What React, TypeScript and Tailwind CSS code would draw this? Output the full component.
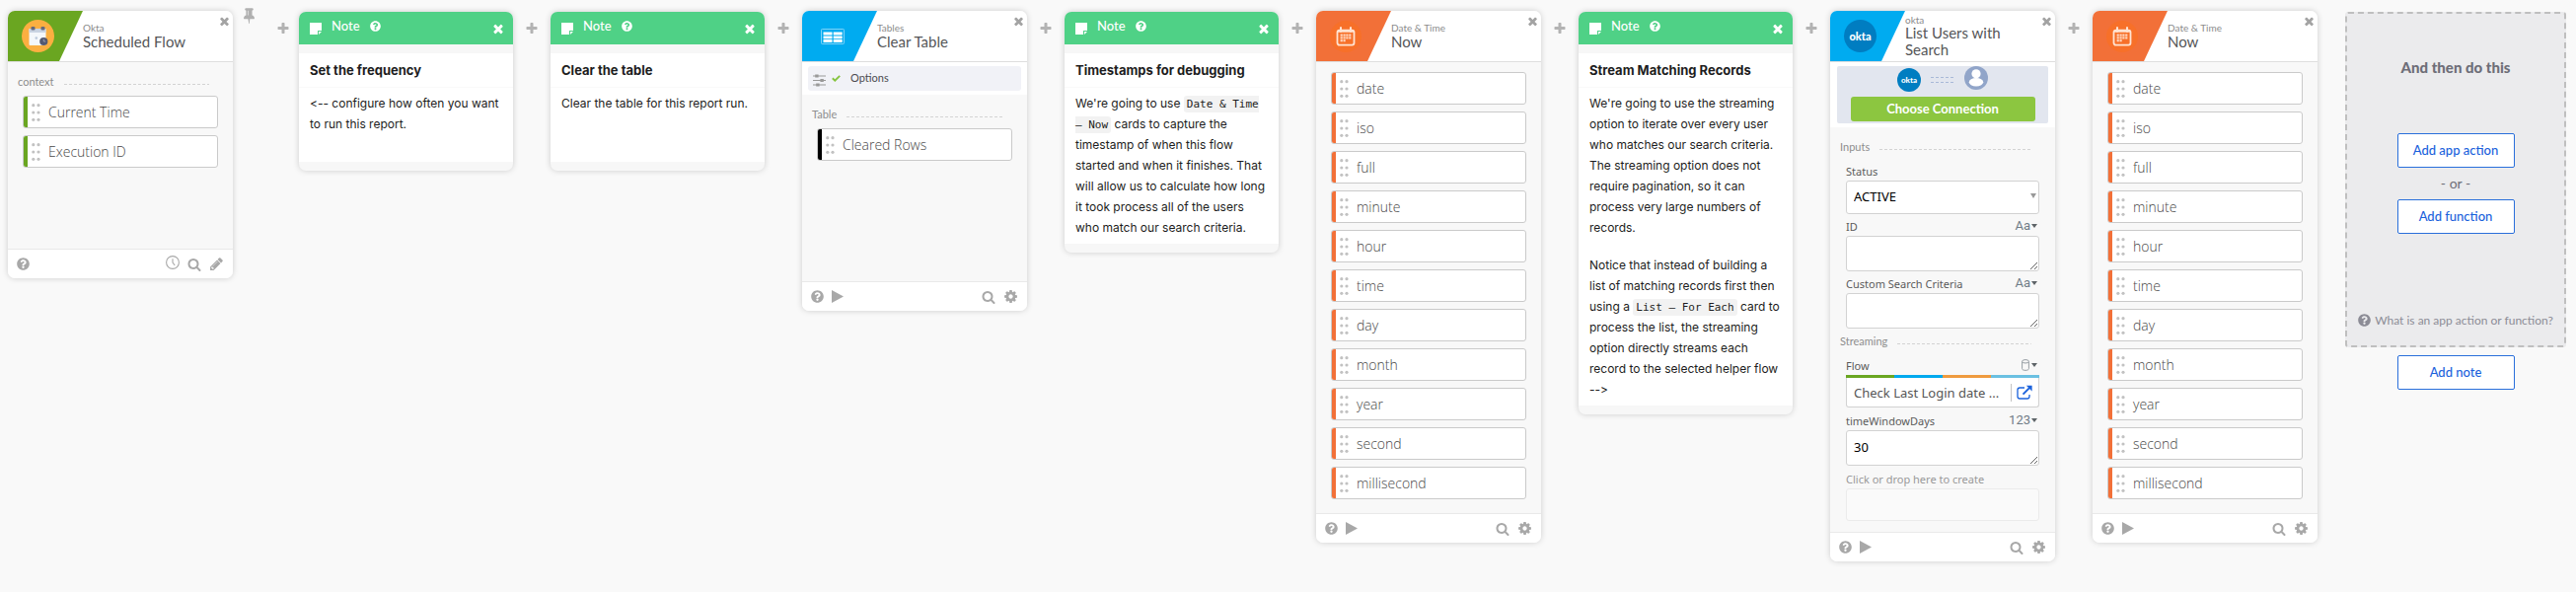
import React, { useId } from "react";
import { FaQuestionCircle } from "react-icons/fa";

const ICONS = {
  times:
    "M1490 1322q0 40-28 68l-136 136q-28 28-68 28t-68-28l-294-294-294 294q-28 28-68 28t-68-28l-136-136q-28-28-28-68t28-68l294-294-294-294q-28-28-28-68t28-68l136-136q28-28 68-28t68 28l294 294 294-294q28-28 68-28t68 28l136 136q28 28 28 68t-28 68l-294 294 294 294q28 28 28 68z",
  plus: "M1600 736v192q0 40-28 68t-68 28h-416v416q0 40-28 68t-68 28h-192q-40 0-68-28t-28-68v-416h-416q-40 0-68-28t-28-68v-192q0-40 28-68t68-28h416v-416q0-40 28-68t68-28h192q40 0 68 28t28 68v416h416q40 0 68 28t28 68z",
  tack: "M800 864v-448q0-14-9-23t-23-9-23 9-9 23v448q0 14 9 23t23 9 23-9 9-23zm672 352q0 26-19 45t-45 19h-429l-51 483q-2 12-10.5 20.5t-20.5 8.5h-1q-27 0-32-27l-76-485h-404q-26 0-45-19t-19-45q0-123 78.5-221.5t177.5-98.5v-512q-52 0-90-38t-38-90 38-90 90-38h640q52 0 90 38t38 90-38 90-90 38v512q99 0 177.5 98.5t78.5 221.5z",
  gear: "M1152 896q0-106-75-181t-181-75-181 75-75 181 75 181 181 75 181-75 75-181zm512-109v222q0 12-8 23t-20 13l-185 28q-19 54-39 91 35 50 107 138 10 12 10 25t-9 23q-27 37-99 108t-94 71q-12 0-26-9l-138-108q-44 23-91 38-16 136-29 186-7 28-36 28h-222q-14 0-24.5-8.5t-11.5-21.5l-28-184q-49-16-90-37l-141 107q-10 9-25 9-14 0-25-11-126-114-165-168-7-10-7-23 0-12 8-23 15-21 51-66.5t54-70.5q-27-50-41-99l-183-27q-13-2-21-12.5t-8-23.5v-222q0-12 8-23t19-13l186-28q14-46 39-92-40-57-107-138-10-12-10-24 0-10 9-23 26-36 98.5-107.5t94.5-71.5q13 0 26 10l138 107q44-23 91-38 16-136 29-186 7-28 36-28h222q14 0 24.5 8.5t11.5 21.5l28 184q49 16 90 37l142-107q9-9 24-9 13 0 25 10 129 119 165 170 7 8 7 22 0 12-8 23-15 21-51 66.5t-54 70.5q26 50 41 98l183 28q13 2 21 12.5t8 23.5z",
  search:
    "M1216 832q0-185-131.5-316.5t-316.5-131.5-316.5 131.5-131.5 316.5 131.5 316.5 316.5 131.5 316.5-131.5 131.5-316.5zm512 832q0 52-38 90t-90 38q-54 0-90-38l-343-342q-179 124-399 124-143 0-273.5-55.5t-225-150-150-225-55.5-273.5 55.5-273.5 150-225 225-150 273.5-55.5 273.5 55.5 225 150 150 225 55.5 273.5q0 220-124 399l343 343q37 37 37 90z",
  pencil:
    "M491 1536l91-91-235-235-91 91v107h128v128h107zm523-928q0-22-22-22-10 0-17 7l-542 542q-7 7-7 17 0 22 22 22 10 0 17-7l542-542q7-7 7-17zm-54-192l416 416-832 832h-416v-416zm683 96q0 53-37 90l-166 166-416-416 166-165q36-38 90-38 53 0 91 38l235 234q37 39 37 91z",
};

function Icon({ name, className }: { name: keyof typeof ICONS; className: string }) {
  return (
    <svg viewBox="0 0 1792 1792" fill="currentColor" aria-hidden="true" className={className}>
      <path d={ICONS[name]} />
    </svg>
  );
}

function AddStep({ withPin = false }: { withPin?: boolean }) {
  return (
    <div className={withPin ? "flex w-[67px] shrink-0 items-start" : "flex w-[38px] shrink-0 items-start justify-center"}>
      {withPin && (
        <button type="button" aria-label="Pin" className="-mt-1 ml-2 mr-[19px] text-[#b0b0b0]">
          <Icon name="tack" className="size-[17px]" />
        </button>
      )}
      <button type="button" aria-label="Add step" className="mt-[11px] text-[#b3b3b3]">
        <Icon name="plus" className="size-[14px]" />
      </button>
    </div>
  );
}

type Tone = "green" | "blue" | "orange" | "black";

const TONE_BG: Record<Tone, string> = {
  green: "bg-[#6aa621]",
  blue: "bg-[#00abf0]",
  orange: "bg-[#f27038]",
  black: "bg-black",
};

interface CardProps {
  tone: Tone;
  logo: React.ReactNode;
  app: string;
  title: string;
  tall?: boolean;
  scheduled?: boolean;
  children: React.ReactNode;
}

function Card({ tone, logo, app, title, tall, scheduled, children }: CardProps) {
  return (
    <article className="flex w-[228px] shrink-0 flex-col overflow-hidden rounded-[7px] bg-[#f8f8f8] shadow-[0_0_6px_rgba(0,0,0,0.18)]">
      <header className="flex h-[52px] border-b border-[#dedede] bg-white">
        <div className={`${TONE_BG[tone]} flex w-[76px] shrink-0 items-center pl-[14px] [clip-path:polygon(0_0,100%_0,52px_100%,0_100%)]`}>
          {logo}
        </div>
        <div className="flex min-w-0 flex-1 flex-col justify-center font-[Lato,sans-serif]">
          <p className={tall ? "text-[10px] leading-[10px] text-[#8b8b8b]" : "text-[10px] leading-[11px] text-[#8b8b8b]"}>{app}</p>
          <h2 className="text-[15px] leading-[17px] text-[#555658]">{title}</h2>
        </div>
        <button type="button" aria-label="Close" className="mr-[2px] mt-1 self-start text-[#a3a3a3]">
          <Icon name="times" className="size-[13px]" />
        </button>
      </header>
      <div className="flex-1">{children}</div>
      <footer className="flex h-[30px] items-center gap-2 border-t border-[#e9e9e9] bg-white px-[9px] text-[#a8a8a8]">
        <button type="button" aria-label="Help">
          <FaQuestionCircle className="size-[13px]" />
        </button>
        {!scheduled && (
          <button type="button" aria-label="Run">
            <svg viewBox="0 0 12 13" fill="currentColor" className="h-[13px] w-3">
              <path d="M0 0l12 6.5L0 13z" />
            </svg>
          </button>
        )}
        <span className="flex-1" />
        {scheduled && (
          <button type="button" aria-label="Schedule" className="mb-1">
            <svg viewBox="0 0 14 14" fill="none" stroke="currentColor" strokeWidth="1.1" className="size-[14px]">
              <circle cx="7" cy="7" r="6.4" />
              <path d="M7 3.2V7l2.2 3" />
            </svg>
          </button>
        )}
        <button type="button" aria-label="Search">
          <Icon name="search" className="size-[14px]" />
        </button>
        <button type="button" aria-label={scheduled ? "Edit" : "Settings"}>
          <Icon name={scheduled ? "pencil" : "gear"} className="size-[15px]" />
        </button>
      </footer>
    </article>
  );
}

function SectionLabel({ children }: { children: React.ReactNode }) {
  return (
    <div className="flex items-center gap-[10px] pl-[10px] pr-6">
      <span className="font-[Lato,sans-serif] text-[11px] leading-4 text-[#8d8d8d]">{children}</span>
      <svg className="mt-1 h-px min-w-0 flex-1" aria-hidden="true">
        <line x1="0" x2="100%" y1="0.5" y2="0.5" stroke="#d3d3d3" strokeDasharray="3 2" />
      </svg>
    </div>
  );
}

function Slot({ tone, children }: { tone: Tone; children: React.ReactNode }) {
  return (
    <li className="flex h-[33px] items-center overflow-hidden rounded-[3px] border border-[#cacaca] bg-white">
      <span className={`${TONE_BG[tone]} h-full w-1`} />
      <svg viewBox="0 0 9 18" fill="#c2c2c2" className="ml-1 mr-2 h-[18px] w-[9px]" aria-hidden="true">
        {[1.7, 9, 16.3].map((y) => (
          <g key={y}>
            <circle cx="1.8" cy={y} r="1.6" />
            <circle cx="7" cy={y} r="1.6" />
          </g>
        ))}
      </svg>
      <span className="font-['Open_Sans','Noto_Sans',sans-serif] text-[14px] leading-5 font-light text-[#484848]">{children}</span>
    </li>
  );
}

function NoteCard({ title, children }: { title: string; children: React.ReactNode }) {
  return (
    <article className="mt-px w-[217px] shrink-0 overflow-hidden rounded-[7px] bg-[#f7f7f7] pb-[9px] font-[Inter,sans-serif] text-[#1d1d21] shadow-[0_0_6px_rgba(0,0,0,0.18)] [font-feature-settings:'calt'_0]">
      <header className="mb-[9px] flex h-[33px] items-center bg-[#4fd186] pl-[11px] pr-2 text-white">
        <svg viewBox="0 0 12 12" fill="currentColor" className="mr-[10px] size-3" aria-hidden="true">
          <path d="M0 0h12v8H8v4H0z" />
          <path d="M9 9h3L9 12z" />
        </svg>
        <span className="pb-[6px] font-[Lato,sans-serif] text-[13px] leading-5 font-medium">Note</span>
        <button type="button" aria-label="About notes" className="mb-1 ml-[10px]">
          <FaQuestionCircle className="size-[11px]" />
        </button>
        <button type="button" aria-label="Close" className="ml-auto">
          <Icon name="times" className="size-[14px]" />
        </button>
      </header>
      <h2 className="border-b border-[#fafafa] bg-white px-[11px] pb-[7px] pt-2 text-[13px] leading-[19px] font-bold">{title}</h2>
      <div className="flex min-h-[75px] flex-col gap-[17px] bg-white pb-[6px] pl-[11px] pr-[10px] pt-[5px] text-[12px] leading-[21px]">{children}</div>
    </article>
  );
}

function Code({ children }: { children: React.ReactNode }) {
  return (
    <code className="rounded-[3px] bg-[#f2f2f2] px-[3px] py-[2px] font-['DejaVu_Sans_Mono',monospace] text-[11px] leading-none">{children}</code>
  );
}

function Caret() {
  return (
    <svg viewBox="0 0 6 4" fill="#5e6468" className="h-1 w-[6px]" aria-hidden="true">
      <path d="M0 0h6L3 4z" />
    </svg>
  );
}

function Field({ label, badge, children }: { label: string; badge?: React.ReactNode; children: (id: string) => React.ReactNode }) {
  const id = useId();
  return (
    <div className="flex flex-col gap-px">
      <div className="flex h-4 items-center justify-between pr-[2px]">
        <label htmlFor={id} className="font-['Noto_Sans','Open_Sans',sans-serif] text-[11px] leading-4 text-[#5b5b5b]">
          {label}
        </label>
        {badge && (
          <button type="button" aria-label={`${label} type`} className="mb-[2px] flex items-center gap-px font-[Roboto,sans-serif] text-[13px] leading-4 text-[#707c87]">
            {badge}
            <Caret />
          </button>
        )}
      </div>
      {children(id)}
    </div>
  );
}

const AREA =
  "block h-9 w-full resize rounded-[3px] border border-[#d2d2d2] bg-white px-[7px] py-[6px] font-['Noto_Sans','Open_Sans',sans-serif] text-[13px] leading-5 text-black outline-none";

function CalendarLogo() {
  return (
    <span className="flex size-8 items-center justify-center rounded-full bg-[#f77029]">
      <svg viewBox="0 0 20 20" className="size-5" aria-hidden="true">
        <rect x="1.5" y="3.6" width="17" height="15" rx="2" fill="none" stroke="#ffe3d2" strokeWidth="1.8" />
        <path d="M2 4.6h16" stroke="#ffe3d2" strokeWidth="2.4" />
        <path d="M5 1v4M15 1v4" stroke="#ffe3d2" strokeWidth="2" strokeLinecap="round" />
        <g fill="#ffd5bd">
          {[7.5, 10.3, 13.1].map((y, row) =>
            [4.6, 7.5, 10.3, 13.2].map((x, col) =>
              row === 2 && col > 1 ? null : <rect key={`${x}-${y}`} x={x} y={y} width="2.2" height="2.2" />
            )
          )}
        </g>
      </svg>
    </span>
  );
}

function NowCard() {
  return (
    <Card tone="orange" app="Date & Time" title="Now" logo={<CalendarLogo />}>
      <ul className="flex flex-col gap-[7px] px-[15px] pb-[14px] pt-[10px]">
        {["date", "iso", "full", "minute", "hour", "time", "day", "month", "year", "second", "millisecond"].map((name) => (
          <Slot key={name} tone="orange">
            {name}
          </Slot>
        ))}
      </ul>
    </Card>
  );
}

const OUTLINE_BUTTON =
  "h-[35px] w-[119px] rounded-[2px] border border-[#2a6fdb] bg-white pb-[2px] font-[Lato,sans-serif] text-[13px] leading-4 font-medium text-[#1a62dc]";

export default function App() {
  return (
    <main className="flex min-h-screen items-start overflow-x-auto bg-[#f9f9f9] px-2 pb-6 pt-[11px]">
      <Card
        tone="green"
        app="Okta"
        title="Scheduled Flow"
        scheduled
        logo={
          <svg viewBox="0 0 33 33" className="size-[33px]" aria-hidden="true">
            <circle cx="16.5" cy="16.5" r="16.5" fill="#fbaf41" />
            <rect x="7.5" y="9" width="17" height="17" rx="1" fill="#f4f7fb" />
            <path d="M7.5 9h17v4h-17z" fill="#c9d3e2" />
            <rect x="9.5" y="7" width="4" height="3.6" rx="1" fill="#66697c" />
            <rect x="19.5" y="7" width="4" height="3.6" rx="1" fill="#66697c" />
            <circle cx="14.8" cy="18.6" r="1.3" fill="#bcc9dc" />
            <circle cx="22.3" cy="22" r="4.1" fill="#555971" />
            <path d="M22.3 19.6V22h2" fill="none" stroke="#a5a9bc" strokeWidth="0.8" />
          </svg>
        }
      >
        <div className="pb-[75px] pt-3">
          <SectionLabel>context</SectionLabel>
          <ul className="flex flex-col gap-[7px] px-[15px] pb-[7px] pt-[6px]">
            <Slot tone="green">Current Time</Slot>
            <Slot tone="green">Execution ID</Slot>
          </ul>
        </div>
      </Card>
      <AddStep withPin />
      <NoteCard title="Set the frequency">
        <p>&lt;-- configure how often you want to run this report.</p>
      </NoteCard>
      <AddStep />
      <NoteCard title="Clear the table">
        <p>Clear the table for this report run.</p>
      </NoteCard>
      <AddStep />
      <Card
        tone="blue"
        app="Tables"
        title="Clear Table"
        logo={
          <svg viewBox="0 0 24 16" className="ml-[5px] h-4 w-6" aria-hidden="true">
            <rect x="0.5" y="0.5" width="23" height="15" rx="0.8" fill="none" stroke="#7fd3f8" />
            <path d="M2.5 3.5h9v3h-9zM12.7 3.5h9v3h-9zM2.5 7.4h9v2.8h-9zM12.7 7.4h9v2.8h-9zM2.5 11.1h9v2.8h-9zM12.7 11.1h9v2.8h-9z" fill="#fff" />
          </svg>
        }
      >
        <div className="bg-white px-[6px] py-1">
          <button type="button" className="flex h-[25px] w-full items-center rounded-[3px] bg-[#f1f2f7] px-[5px] text-left">
            <svg viewBox="0 0 13 13" className="mt-1 size-[13px]" fill="#999" aria-hidden="true">
              <path d="M0 1.500h13v1H0zM0 6h13v1H0zM0 10.500h13v1H0z" />
              <path d="M2.200 .4h3.400v3.200H2.200zM7.400 4.900h3.400v3.200H7.400zM3.200 9.400h3.400v3.200H3.200z" />
            </svg>
            <svg viewBox="0 0 9 7" className="ml-[6px] mr-[10px] h-[7px] w-[9px]" fill="none" stroke="#86c440" strokeWidth="2" aria-hidden="true">
              <path d="M0.800 3.200l2.500 2.400L8.200 0.900" />
            </svg>
            <span className="pb-px font-[Lato,sans-serif] text-[11px] leading-4 text-[#4c4c50]">Options</span>
          </button>
        </div>
        <div className="pb-[122px] pt-3">
          <SectionLabel>Table</SectionLabel>
          <ul className="px-[15px] pt-[6px]">
            <Slot tone="black">Cleared Rows</Slot>
          </ul>
        </div>
      </Card>
      <AddStep />
      <NoteCard title="Timestamps for debugging">
        <p>
          We're going to use <Code>Date &amp; Time – Now</Code> cards to capture the timestamp of when this flow started and when it finishes. That will
          allow us to calculate how long it took process all of the users who match our search criteria.
        </p>
      </NoteCard>
      <AddStep />
      <NowCard />
      <AddStep />
      <NoteCard title="Stream Matching Records">
        <p>
          We're going to use the streaming option to iterate over every user who matches our search criteria. The streaming option does not require
          pagination, so it can process very large numbers of records.
        </p>
        <p>
          Notice that instead of building a list of matching records first then using a <Code>List – For Each</Code> card to process the list, the
          streaming option directly streams each record to the selected helper flow --&gt;
        </p>
      </NoteCard>
      <AddStep />
      <Card
        tone="blue"
        app="okta"
        title="List Users with Search"
        tall
        logo={
          <span className="flex size-[33px] items-center justify-center rounded-full bg-[#007dc1] pb-px font-[Lato,sans-serif] text-[11px] leading-none font-black text-white">
            okta
          </span>
        }
      >
        <div className="bg-white px-[7px] py-1">
          <div className="flex h-[58px] flex-col items-center rounded-[2px] bg-[#e2e6ef]">
            <div className="flex h-[31px] shrink-0 items-center">
              <span className="mb-[5px] flex size-6 items-center justify-center self-end rounded-full bg-[#007dc1] pb-px font-[Lato,sans-serif] text-[8px] leading-none font-black text-white">
                okta
              </span>
              <svg viewBox="0 0 24 6" className="mx-[10px] mb-1 h-[6px] w-6" stroke="#a9b9d8" strokeDasharray="3 2" aria-hidden="true">
                <path d="M0 .5h24M0 5.5h24" />
              </svg>
              <svg viewBox="0 0 24 24" className="-mt-2 size-6" aria-hidden="true">
                <circle cx="12" cy="12" r="12" fill="#91a5c9" />
                <circle cx="12" cy="7.8" r="4.6" fill="#fff" />
                <ellipse cx="12" cy="16.3" rx="7.2" ry="4.2" fill="#fff" />
              </svg>
            </div>
            <button type="button" className="h-[25px] w-[187px] rounded-[3px] bg-[#8cc640] pb-[2px] font-[Lato,sans-serif] text-[13px] leading-4 font-bold text-white">
              Choose Connection
            </button>
          </div>
        </div>
        <div className="pb-[11px] pt-3">
          <SectionLabel>Inputs</SectionLabel>
          <div className="flex flex-col gap-[5px] px-4 pb-[5px] pt-[9px]">
            <Field label="Status">
              {(id) => (
                <div className="grid items-center">
                  <select
                    id={id}
                    defaultValue="ACTIVE"
                    className="col-start-1 row-start-1 h-[34px] w-full appearance-none rounded-[3px] border border-[#d2d2d2] bg-white px-[7px] font-['Noto_Sans','Open_Sans',sans-serif] text-[13px] text-black outline-none"
                  >
                    <option>ACTIVE</option>
                  </select>
                  <svg viewBox="0 0 6 5" fill="#999" className="pointer-events-none col-start-1 row-start-1 mb-1 mr-[3px] h-[5px] w-[6px] justify-self-end" aria-hidden="true">
                    <path d="M0 0h6L3 5z" />
                  </svg>
                </div>
              )}
            </Field>
            <Field label="ID" badge="Aa">
              {(id) => <textarea id={id} className={AREA} />}
            </Field>
            <Field label="Custom Search Criteria" badge="Aa">
              {(id) => <textarea id={id} className={AREA} />}
            </Field>
          </div>
          <SectionLabel>Streaming</SectionLabel>
          <div className="flex flex-col gap-[6px] px-4 pt-[9px]">
            <Field
              label="Flow"
              badge={
                <svg viewBox="0 0 8 12" fill="none" stroke="#969da3" className="mr-px h-3 w-2" aria-hidden="true">
                  <path d="M.6 2.5v7.200c0 2.200 6.800 2.200 6.800 0V2.500" />
                  <ellipse cx="4" cy="2.3" rx="3.4" ry="1.7" />
                </svg>
              }
            >
              {(id) => (
                <div>
                  <div className="grid h-[3px] grid-cols-4">
                    <span className="bg-[#6aa621]" />
                    <span className="bg-[#00a9ee]" />
                    <span className="bg-[#ef9b3f]" />
                    <span className="bg-[#6bc0e2]" />
                  </div>
                  <div className="flex h-[30px] items-center rounded-b-[3px] border border-t-0 border-[#d2d2d2] bg-white pl-[7px] pr-[6px]">
                    <input
                      id={id}
                      readOnly
                      value="Check Last Login date ..."
                      className="min-w-0 flex-1 bg-transparent font-['Noto_Sans','Open_Sans',sans-serif] text-[13px] leading-5 text-[#555] outline-none"
                    />
                    <button type="button" aria-label="Open flow" className="border-l border-[#c4c4c4] pl-[5px] text-[#1a62dc]">
                      <svg viewBox="0 0 16 16" fill="none" stroke="currentColor" className="my-px size-4" aria-hidden="true">
                        <path d="M8 3H3.200Q1 3 1 5.200v6.600Q1 14 3.200 14h7.600Q13 14 13 11.800V10" strokeWidth="1.3" />
                        <path d="M6.500 9.600L13.500 2.600" strokeWidth="2" />
                        <path d="M9.800 .8h5.800v5.800z" fill="currentColor" stroke="none" />
                      </svg>
                    </button>
                  </div>
                </div>
              )}
            </Field>
            <Field label="timeWindowDays" badge="123">
              {(id) => <textarea id={id} defaultValue="30" className={AREA} />}
            </Field>
            <div className="flex flex-col gap-px">
              <p className="font-['Noto_Sans','Open_Sans',sans-serif] text-[11px] leading-4 text-[#999]">Click or drop here to create</p>
              <div className="h-[33px] rounded-[3px] border border-[#ebebeb] bg-[#fafafa]" />
            </div>
          </div>
        </div>
      </Card>
      <AddStep />
      <NowCard />
      <section className="ml-7 mt-px flex min-w-[224px] flex-col items-center gap-2">
        <div className="flex w-full flex-col items-center rounded-[3px] border-2 border-dashed border-[#bfbfbf] bg-[#ebebed] pb-[15px] pt-11 font-[Lato,sans-serif]">
          <h2 className="mb-[57px] text-[15px] leading-5 font-black text-[#6e6e78]">And then do this</h2>
          <button type="button" className={OUTLINE_BUTTON}>
            Add app action
          </button>
          <p className="py-[6px] text-[14px] leading-5 text-[#6e6e78]">- or -</p>
          <button type="button" className={OUTLINE_BUTTON}>
            Add function
          </button>
          <a href="#help" className="mt-[78px] flex items-center gap-1 text-[12px] leading-5 text-[#8c8c96]">
            <FaQuestionCircle className="mb-[2px] size-[13px]" />
            What is an app action or function?
          </a>
        </div>
        <button type="button" className={OUTLINE_BUTTON}>
          Add note
        </button>
      </section>
    </main>
  );
}
